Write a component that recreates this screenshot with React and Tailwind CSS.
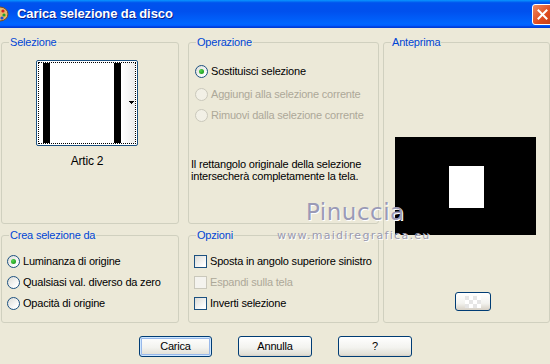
import React from 'react';

const FONT = "font-['Liberation_Sans',Arial,sans-serif]";

const Radio = ({ checked, disabled, label }) => (
  <div className="flex items-center gap-[3px] h-[13px]">
    <span
      className={`w-[13px] h-[13px] shrink-0 rounded-full border flex items-center justify-center ${
        disabled
          ? 'border-[#CAC8BB] bg-[#F2F0E6]'
          : 'border-[#1C5180] bg-[linear-gradient(135deg,#DCDCD7,#FFFFFF_80%)]'
      }`}
    >
      {checked && <span className="w-[5px] h-[5px] rounded-full bg-[radial-gradient(circle_at_35%_35%,#55D551,#21A121_70%)]" />}
    </span>
    <span className={disabled ? 'text-[#ACA899]' : 'text-black'}>{label}</span>
  </div>
);

const Check = ({ disabled, label }) => (
  <div className="flex items-center gap-[3px] h-[13px]">
    <span
      className={`w-[13px] h-[13px] shrink-0 border ${
        disabled
          ? 'border-[#CAC8BB] bg-[#F4F3EE]'
          : 'border-[#1C5180] bg-[linear-gradient(135deg,#DCDCD7,#FFFFFF_85%)]'
      }`}
    />
    <span className={disabled ? 'text-[#ACA899]' : 'text-black'}>{label}</span>
  </div>
);

const Group = ({ title, className = '', children }) => (
  <fieldset className={`border border-[#D0D0BF] rounded-[3px] min-w-0 ${className}`}>
    <legend className="ml-[7px] px-[1px] leading-[14px] text-[#0046D5]">{title}</legend>
    {children}
  </fieldset>
);

const XpButton = ({ children, isDefault, className = '' }) => (
  <button
    className={`h-[21px] border border-[#003C74] rounded-[3px] bg-[linear-gradient(180deg,#FFFFFF,#F3F3EF_55%,#E3E1D8_90%,#D6D0C5)] text-black text-[11px] flex items-center justify-center ${
      isDefault ? 'shadow-[inset_0_0_0_1px_#CEE7FF,inset_0_0_0_2px_#98B8EA]' : ''
    } ${className}`}
  >
    {children}
  </button>
);

export default function App() {
  return (
    <div className={`relative w-[550px] h-[364px] overflow-hidden bg-[#ECE9D8] text-[11px] tracking-[-0.2px] ${FONT}`}>
      {/* title bar */}
      <div className="h-[28px] flex items-center bg-[linear-gradient(180deg,#0997FF,#0053EE_10%,#0050EE_40%,#0066FF_85%,#005BFF_92%,#003DD7_96%,#003DD7)]">
        <svg width="18" height="18" viewBox="0 0 18 18" className="ml-[-9px] shrink-0">
          <ellipse cx="9" cy="9" rx="8" ry="7" fill="#E8B66A" stroke="#7A4A1A" strokeWidth="1" />
          <circle cx="12" cy="6" r="1.6" fill="#D02020" />
          <circle cx="13" cy="10" r="1.6" fill="#20A030" />
          <circle cx="11" cy="13" r="1.6" fill="#2050D0" />
        </svg>
        <span className="ml-[8px] text-white font-bold text-[13px] tracking-[-0.1px] [text-shadow:1px_1px_0_#0A1E8A]">
          Carica selezione da disco
        </span>
        <div className="ml-auto mr-[-3px] w-[21px] h-[21px] rounded-[3px] border border-white bg-[linear-gradient(135deg,#F08A60,#DE4A1E_60%,#C4401A)] flex items-center justify-center">
          <svg width="11" height="11" viewBox="0 0 11 11">
            <path d="M1.5 1.5 L9.5 9.5 M9.5 1.5 L1.5 9.5" stroke="#fff" strokeWidth="2" strokeLinecap="square" />
          </svg>
        </div>
      </div>

      {/* body */}
      <div className="pt-[7px] pl-[1px] flex">
        <div className="grid grid-cols-[178px_191px] grid-rows-[189px_95px] gap-x-[9px] gap-y-[4px]">
          <Group title="Selezione">
            <div className="flex flex-col items-center pr-[6px] pt-[11px]">
              <div className="w-[102px] h-[86px] border border-[#1C5180] rounded-[2px] bg-white p-[1px]">
                <div className="h-full border border-dotted border-black flex">
                  <div className="w-[4px] bg-white" />
                  <div className="w-[7px] bg-black" />
                  <div className="w-[64px] bg-white" />
                  <div className="w-[7px] bg-black" />
                  <div className="flex-1 bg-[linear-gradient(90deg,#FFFFFF,#EDEDED)] flex items-center justify-end pr-[1px]">
                    <svg width="5" height="4" viewBox="0 0 5 4" shapeRendering="crispEdges">
                      <rect x="0" y="0" width="5" height="1" fill="#000" />
                      <rect x="1" y="1" width="3" height="1" fill="#000" />
                      <rect x="2" y="2" width="1" height="1" fill="#000" />
                    </svg>
                  </div>
                </div>
              </div>
              <div className="mt-[9px] text-[12px] leading-[13px] text-black">Artic 2</div>
            </div>
          </Group>

          <Group title="Operazione">
            <div className="pl-[6px] pt-[16px] leading-[13px]">
              <Radio checked label="Sostituisci selezione" />
              <div className="mt-[10px]">
                <Radio disabled label="Aggiungi alla selezione corrente" />
              </div>
              <div className="mt-[8px]">
                <Radio disabled label="Rimuovi dalla selezione corrente" />
              </div>
              <p className="mt-[36px] ml-[-4px] leading-[12px] text-black">
                Il rettangolo originale della selezione
                <br />
                intersecherà completamente la tela.
              </p>
            </div>
          </Group>

          <Group title="Crea selezione da">
            <div className="pl-[5px] pt-[13px] flex flex-col gap-[8px] leading-[13px]">
              <Radio checked label="Luminanza di origine" />
              <Radio label="Qualsiasi val. diverso da zero" />
              <Radio label="Opacità di origine" />
            </div>
          </Group>

          <Group title="Opzioni">
            <div className="pl-[5px] pt-[13px] flex flex-col gap-[8px] leading-[13px]">
              <Check label="Sposta in angolo superiore sinistro" />
              <Check disabled label="Espandi sulla tela" />
              <Check label="Inverti selezione" />
            </div>
          </Group>
        </div>

        <Group title="Anteprima" className="ml-[4px] w-[167px] h-[288px]">
          <div className="pl-[11px] pt-[88px]">
            <div className="w-[141px] h-[98px] bg-black pl-[54px] pt-[29px]">
              <div className="w-[35px] h-[42px] bg-white" />
            </div>
            <div className="mt-[57px] ml-[60px] w-[36px] h-[19px] border border-[#003C74] rounded-[3px] bg-[linear-gradient(180deg,#FFFFFF,#F3F3EF_60%,#D6D0C5)] flex items-center justify-center">
              <div className="w-[16px] h-[12px] bg-[conic-gradient(#FFFFFF_25%,#E6E6E6_0_50%,#FFFFFF_0_75%,#E6E6E6_0)] bg-[length:8px_8px]" />
            </div>
          </div>
        </Group>
      </div>

      {/* buttons */}
      <div className="mt-[13px] flex justify-center gap-[26px] pl-[1px]">
        <XpButton isDefault className="w-[73px]">Carica</XpButton>
        <XpButton className="w-[74px]">Annulla</XpButton>
        <XpButton className="w-[74px]">?</XpButton>
      </div>

      {/* watermark overlay */}
      <div className="absolute left-[306px] top-[199px] font-['DejaVu_Sans',sans-serif] text-[23px] leading-[26px] tracking-[0.5px] text-[#9A9AB6] [text-shadow:1px_1px_0_#FFFFFF]">
        Pinuccia
      </div>
      <div className="absolute left-[277px] top-[229px] font-['DejaVu_Sans',sans-serif] text-[11px] leading-[13px] tracking-[1.3px] text-[#9A9AB0] [text-shadow:1px_1px_0_#FFFFFF]">
        www.maidiregrafica.eu
      </div>
    </div>
  );
}
